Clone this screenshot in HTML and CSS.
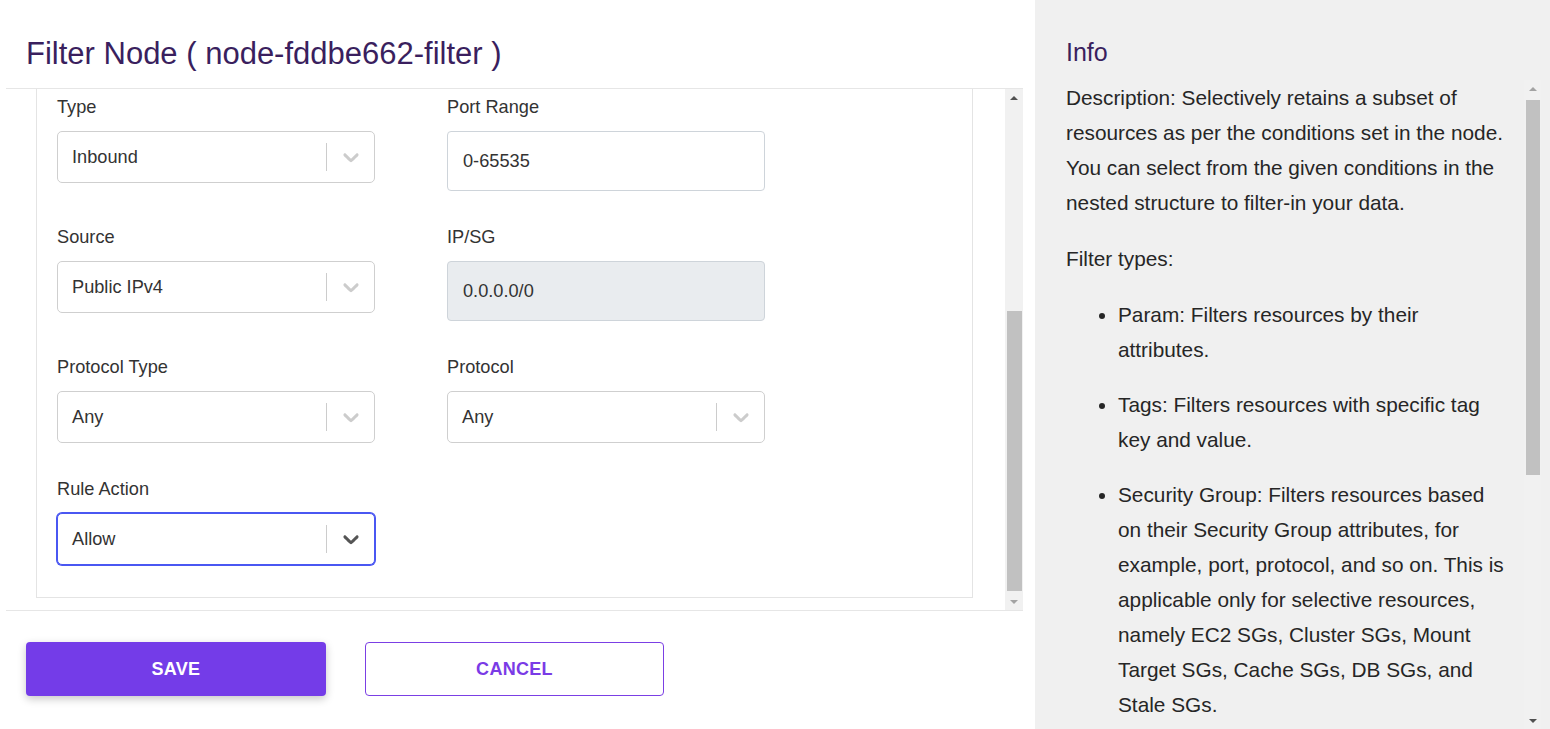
FILE: index.html
```html
<!DOCTYPE html>
<html lang="en">
<head>
<meta charset="utf-8">
<title>Filter Node</title>
<link rel="stylesheet" href="styles.css">
</head>
<body>
<div class="page">
  <section class="main">
    <h1 class="title">Filter Node ( node-fddbe662-filter )</h1>
    <div class="body">
      <div class="scroll">
        <div class="scroll-view">
          <div class="scroll-inner">
            <div class="card">
              <div class="grid">
                <div class="field">
                  <label class="label">Type</label>
                  <div class="select"><span class="value">Inbound</span><span class="sep"></span><span class="ind"><svg viewBox="0 0 20 20" width="26" height="26"><path d="M4.516 7.548c0.436-0.446 1.043-0.481 1.576 0l3.908 3.747 3.908-3.747c0.533-0.481 1.141-0.446 1.574 0 0.436 0.445 0.408 1.197 0 1.615-0.406 0.418-4.695 4.502-4.695 4.502-0.217 0.223-0.502 0.335-0.787 0.335s-0.57-0.112-0.789-0.335c0 0-4.287-4.084-4.695-4.502s-0.436-1.170 0-1.615z"/></svg></span></div>
                </div>
                <div class="field">
                  <label class="label">Port Range</label>
                  <input class="input" type="text" value="0-65535">
                </div>

                <div class="field">
                  <label class="label">Source</label>
                  <div class="select"><span class="value">Public IPv4</span><span class="sep"></span><span class="ind"><svg viewBox="0 0 20 20" width="26" height="26"><path d="M4.516 7.548c0.436-0.446 1.043-0.481 1.576 0l3.908 3.747 3.908-3.747c0.533-0.481 1.141-0.446 1.574 0 0.436 0.445 0.408 1.197 0 1.615-0.406 0.418-4.695 4.502-4.695 4.502-0.217 0.223-0.502 0.335-0.787 0.335s-0.57-0.112-0.789-0.335c0 0-4.287-4.084-4.695-4.502s-0.436-1.170 0-1.615z"/></svg></span></div>
                </div>
                <div class="field">
                  <label class="label">IP/SG</label>
                  <input class="input disabled" type="text" value="0.0.0.0/0" disabled>
                </div>

                <div class="field">
                  <label class="label">Protocol Type</label>
                  <div class="select"><span class="value">Any</span><span class="sep"></span><span class="ind"><svg viewBox="0 0 20 20" width="26" height="26"><path d="M4.516 7.548c0.436-0.446 1.043-0.481 1.576 0l3.908 3.747 3.908-3.747c0.533-0.481 1.141-0.446 1.574 0 0.436 0.445 0.408 1.197 0 1.615-0.406 0.418-4.695 4.502-4.695 4.502-0.217 0.223-0.502 0.335-0.787 0.335s-0.57-0.112-0.789-0.335c0 0-4.287-4.084-4.695-4.502s-0.436-1.170 0-1.615z"/></svg></span></div>
                </div>
                <div class="field">
                  <label class="label">Protocol</label>
                  <div class="select"><span class="value">Any</span><span class="sep"></span><span class="ind"><svg viewBox="0 0 20 20" width="26" height="26"><path d="M4.516 7.548c0.436-0.446 1.043-0.481 1.576 0l3.908 3.747 3.908-3.747c0.533-0.481 1.141-0.446 1.574 0 0.436 0.445 0.408 1.197 0 1.615-0.406 0.418-4.695 4.502-4.695 4.502-0.217 0.223-0.502 0.335-0.787 0.335s-0.57-0.112-0.789-0.335c0 0-4.287-4.084-4.695-4.502s-0.436-1.170 0-1.615z"/></svg></span></div>
                </div>

                <div class="field">
                  <label class="label">Rule Action</label>
                  <div class="select focused"><span class="value">Allow</span><span class="sep"></span><span class="ind"><svg viewBox="0 0 20 20" width="26" height="26"><path d="M4.516 7.548c0.436-0.446 1.043-0.481 1.576 0l3.908 3.747 3.908-3.747c0.533-0.481 1.141-0.446 1.574 0 0.436 0.445 0.408 1.197 0 1.615-0.406 0.418-4.695 4.502-4.695 4.502-0.217 0.223-0.502 0.335-0.787 0.335s-0.57-0.112-0.789-0.335c0 0-4.287-4.084-4.695-4.502s-0.436-1.170 0-1.615z"/></svg></span></div>
                </div>
              </div>
            </div>
          </div>
        </div>
        <div class="scrollbar sb-left">
          <div class="sb-btn"><span class="arrow-up dark"></span></div>
          <div class="sb-track">
            <div class="sb-thumb"></div>
          </div>
          <div class="sb-btn"><span class="arrow-down light"></span></div>
        </div>
      </div>
      <div class="footer">
        <button class="btn btn-primary" type="button">Save</button>
        <button class="btn btn-outline" type="button">Cancel</button>
      </div>
    </div>
  </section>
  <aside class="info">
    <h2 class="info-title">Info</h2>
    <div class="info-body">
      <div class="info-text">
        <p>Description: Selectively retains a subset of resources as per the conditions set in the node. You can select from the given conditions in the nested structure to filter-in your data.</p>
        <p>Filter types:</p>
        <ul>
          <li>Param: Filters resources by their attributes.</li>
          <li>Tags: Filters resources with specific tag key and value.</li>
          <li>Security Group: Filters resources based on their Security Group attributes, for example, port, protocol, and so on. This is applicable only for selective resources, namely EC2 SGs, Cluster SGs, Mount Target SGs, Cache SGs, DB SGs, and Stale SGs.</li>
        </ul>
      </div>
      <div class="scrollbar sb-right">
        <div class="sb-btn"><span class="arrow-up light"></span></div>
        <div class="sb-track">
          <div class="sb-thumb"></div>
        </div>
        <div class="sb-btn"><span class="arrow-down dark"></span></div>
      </div>
    </div>
  </aside>
</div>
</body>
</html>
```

FILE: styles.css
```css
* { box-sizing: border-box; }
html, body { margin: 0; padding: 0; }
body {
  font-family: "Liberation Sans", Arial, sans-serif;
  color: #333;
  background: #fff;
  overflow: hidden;
}
.page {
  display: flex;
  width: 1550px;
  height: 729px;
}
.main {
  width: 1035px;
  height: 729px;
  display: flex;
  flex-direction: column;
  background: #fff;
}
.title {
  margin: 0;
  height: 88px;
  padding: 21px 0 0 26px;
  line-height: 66px;
  font-size: 31px;
  font-weight: 400;
  color: #3a1f5e;
  white-space: nowrap;
}
.body {
  margin: 0 12px 0 6px;
  display: flex;
  flex-direction: column;
  flex: 1;
  min-height: 0;
}

/* scroll area */
.scroll {
  height: 522px;
  border-top: 1px solid #e6e6e6;
  display: flex;
}
.scroll-view {
  flex: 1;
  min-width: 0;
  overflow: hidden;
  display: flex;
  flex-direction: column-reverse;
}
.scroll-inner { flex: none; }

/* scrollbars */
.scrollbar {
  width: 18px;
  flex: none;
  background: #f1f1f1;
  display: flex;
  flex-direction: column;
}
.sb-btn {
  height: 17px;
  flex: none;
  display: flex;
  align-items: center;
  justify-content: center;
}
.sb-track {
  flex: 1;
  display: flex;
  flex-direction: column;
  padding: 0 1px 0 2px;
}
.sb-thumb { background: #c1c1c1; }
.sb-left .sb-track { justify-content: flex-end; padding-bottom: 2px; }
.sb-left .sb-thumb { height: 280px; }
.sb-right .sb-track { padding-top: 3px; }
.sb-right .sb-thumb { height: 375px; }
.arrow-up,
.arrow-down {
  width: 0;
  height: 0;
  border-left: 4px solid transparent;
  border-right: 4px solid transparent;
}
.arrow-up { border-bottom: 4px solid #505050; }
.arrow-down { border-top: 4px solid #505050; }
.arrow-up.light { border-bottom-color: #a3a3a3; }
.arrow-down.light { border-top-color: #a3a3a3; }

.card {
  margin: 24px 32px 12px 30px;
  border: 1px solid #e4e4e4;
  padding: 60px 20px 32px 20px;
}
.grid {
  display: grid;
  grid-template-columns: 318px 318px;
  column-gap: 72px;
  row-gap: 34px;
  align-items: start;
}
.field { display: flex; flex-direction: column; }
.label {
  font-size: 18.2px;
  line-height: 24px;
  margin-bottom: 12px;
  color: #333;
}
.select {
  height: 52px;
  border: 1px solid #cfcfcf;
  border-radius: 5px;
  display: flex;
  align-items: center;
  background: #fff;
}
.select .value {
  flex: 1;
  padding-left: 14px;
  font-size: 18.2px;
  color: #333;
}
.select .sep {
  width: 1px;
  height: 28px;
  background: #cccccc;
}
.select .ind {
  width: 47px;
  display: flex;
  justify-content: center;
  align-items: center;
}
.select svg { fill: #cccccc; display: block; }
.select.focused {
  border-color: #4a57f2;
  box-shadow: 0 0 0 1px #4a57f2;
}
.select.focused svg { fill: #555; }
.input {
  height: 60px;
  width: 318px;
  border: 1px solid #ced4da;
  border-radius: 4px;
  padding: 0 15px;
  font-family: "Liberation Sans", Arial, sans-serif;
  font-size: 18.2px;
  color: #333;
  background: #fff;
  outline: none;
}
.input.disabled {
  background: #e9ecef;
  color: #333;
  -webkit-text-fill-color: #333;
  opacity: 1;
}
.footer {
  border-top: 1px solid #e6e6e6;
  padding: 31px 0 0 20px;
  display: flex;
  gap: 39px;
}
.btn {
  height: 54px;
  border-radius: 4px;
  font-family: "Liberation Sans", Arial, sans-serif;
  font-size: 18px;
  font-weight: 700;
  text-transform: uppercase;
  letter-spacing: 0.3px;
  cursor: pointer;
}
.btn-primary {
  width: 300px;
  background: #743ce8;
  border: none;
  color: #fff;
  box-shadow: 0 3px 8px rgba(0, 0, 0, 0.22);
}
.btn-outline {
  width: 299px;
  background: #fff;
  border: 1px solid #7b3fe4;
  color: #7a3be6;
}
.info {
  flex: 1;
  height: 729px;
  background: #f0f0f0;
  padding: 0 9px 0 31px;
  display: flex;
  flex-direction: column;
}
.info-title {
  margin: 0;
  height: 80px;
  padding-top: 34px;
  line-height: 36px;
  font-size: 25px;
  font-weight: 400;
  color: #3a1f5e;
}
.info-body {
  flex: 1;
  min-height: 0;
  display: flex;
}
.info-text {
  flex: 1;
  min-width: 0;
  overflow: hidden;
  font-size: 20.8px;
  line-height: 35px;
  color: #262626;
  padding-right: 18px;
}
.info-text p { margin: 0 0 21px 0; }
.info-text ul {
  margin: 21px 0 0 0;
  padding-left: 52px;
}
.info-text li { margin-bottom: 20px; }
.sb-right { width: 17px; }
```
